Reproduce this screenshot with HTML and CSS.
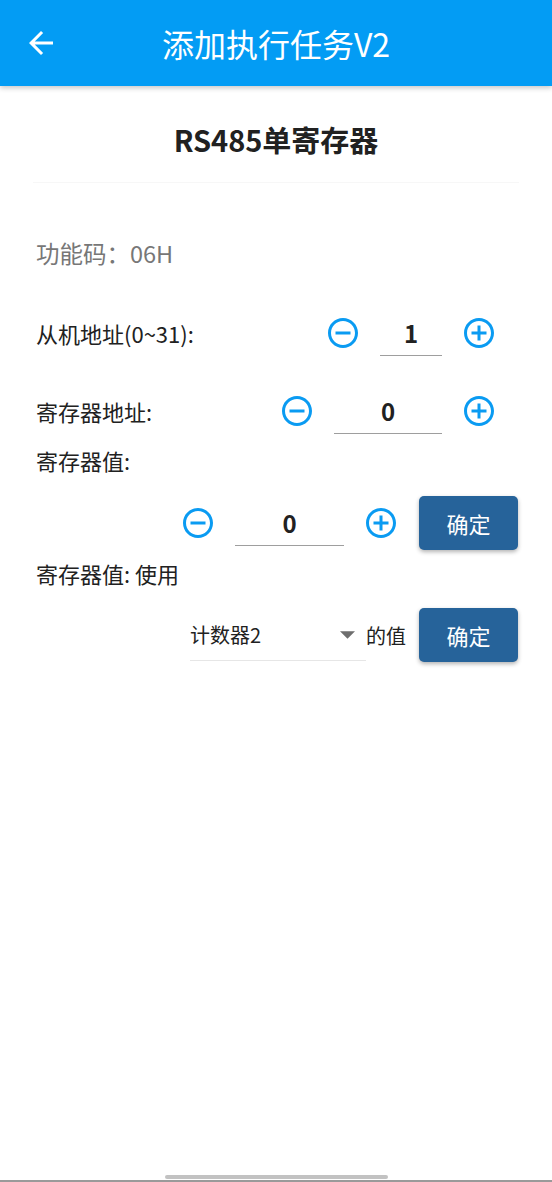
FILE: index.html
```html
<!DOCTYPE html>
<html lang="zh">
<head>
<meta charset="utf-8">
<title>添加执行任务V2</title>
<link rel="stylesheet" href="styles.css">
</head>
<body>
<div class="screen">
  <header class="appbar">
    <svg class="back" viewBox="0 0 24 24" width="36" height="36"><path fill="#fff" d="M20 11H7.83l5.59-5.59L12 4l-8 8 8 8 1.41-1.41L7.83 13H20v-2z"/></svg>
    <div class="appbar-title">添加执行任务V2</div>
    <div class="appbar-spacer"></div>
  </header>

  <main class="content">
    <div class="head"><h1 class="card-title">RS485单寄存器</h1></div>

    <div class="info">功能码：06H</div>

    <div class="row row-slave">
      <span class="label">从机地址(0~31):</span>
      <div class="stepper">
        <svg class="ic" viewBox="0 0 24 24" width="36" height="36"><path d="M7 11v2h10v-2H7zm5-9C6.48 2 2 6.48 2 12s4.48 10 10 10 10-4.480 10-10S17.52 2 12 2zm0 18c-4.41 0-8-3.59-8-8s3.59-8 8-8 8 3.590 8 8-3.59 8-8 8z"/></svg>
        <div class="field field-s">1</div>
        <svg class="ic" viewBox="0 0 24 24" width="36" height="36"><path d="M13 7h-2v4H7v2h4v4h2v-4h4v-2h-4V7zm-1-5C6.48 2 2 6.48 2 12s4.48 10 10 10 10-4.48 10-10S17.52 2 12 2zm0 18c-4.41 0-8-3.59-8-8s3.59-8 8-8 8 3.59 8 8-3.59 8-8 8z"/></svg>
      </div>
    </div>

    <div class="row row-reg">
      <span class="label">寄存器地址:</span>
      <div class="stepper">
        <svg class="ic" viewBox="0 0 24 24" width="36" height="36"><path d="M7 11v2h10v-2H7zm5-9C6.48 2 2 6.48 2 12s4.48 10 10 10 10-4.48 10-10S17.52 2 12 2zm0 18c-4.41 0-8-3.59-8-8s3.59-8 8-8 8 3.59 8 8-3.59 8-8 8z"/></svg>
        <div class="field field-l">0</div>
        <svg class="ic" viewBox="0 0 24 24" width="36" height="36"><path d="M13 7h-2v4H7v2h4v4h2v-4h4v-2h-4V7zm-1-5C6.48 2 2 6.48 2 12s4.48 10 10 10 10-4.48 10-10S17.52 2 12 2zm0 18c-4.41 0-8-3.59-8-8s3.59-8 8-8 8 3.59 8 8-3.59 8-8 8z"/></svg>
      </div>
    </div>

    <div class="label-line lbl-value">寄存器值:</div>

    <div class="row row-end row-value">
      <div class="stepper stepper-inline">
        <svg class="ic" viewBox="0 0 24 24" width="36" height="36"><path d="M7 11v2h10v-2H7zm5-9C6.48 2 2 6.48 2 12s4.48 10 10 10 10-4.48 10-10S17.52 2 12 2zm0 18c-4.41 0-8-3.59-8-8s3.59-8 8-8 8 3.59 8 8-3.59 8-8 8z"/></svg>
        <div class="field field-m">0</div>
        <svg class="ic" viewBox="0 0 24 24" width="36" height="36"><path d="M13 7h-2v4H7v2h4v4h2v-4h4v-2h-4V7zm-1-5C6.48 2 2 6.48 2 12s4.48 10 10 10 10-4.48 10-10S17.52 2 12 2zm0 18c-4.41 0-8-3.59-8-8s3.59-8 8-8 8 3.59 8 8-3.59 8-8 8z"/></svg>
      </div>
      <button class="btn">确定</button>
    </div>

    <div class="label-line lbl-use">寄存器值: 使用</div>

    <div class="row row-end row-use">
      <div class="dropdown">
        <span>计数器2</span>
        <svg class="caret" viewBox="0 0 14 7" width="15" height="8"><path d="M0 0h14L7 7z" fill="#6e6e6e"/></svg>
      </div>
      <span class="suffix">的值</span>
      <button class="btn">确定</button>
    </div>
  </main>

  <footer class="sysbar">
    <div class="home-indicator"></div>
    <div class="bottom-line"></div>
  </footer>
</div>
</body>
</html>
```

FILE: styles.css
```css
* { box-sizing: border-box; }

html, body {
  margin: 0;
  padding: 0;
  background: #ffffff;
}

body {
  font-family: "Noto Sans CJK SC", "Noto Sans", sans-serif;
  color: #212121;
}

.screen {
  width: 552px;
  height: 1182px;
  display: flex;
  flex-direction: column;
  overflow: hidden;
}

.appbar {
  position: relative;
  z-index: 2;
  height: 86px;
  flex: none;
  background: #039cf4;
  display: flex;
  align-items: center;
  box-shadow: 0 2px 5px rgba(0, 0, 0, 0.22);
}

.back {
  display: block;
  margin-left: 23px;
  flex: none;
}

.appbar-title {
  flex: 1;
  text-align: center;
  color: #ffffff;
  font-size: 32px;
  line-height: 40px;
  font-weight: 400;
}

.appbar-spacer {
  width: 59px;
  flex: none;
}

.content {
  flex: none;
  padding: 0 34px 0 36px;
}

.head {
  margin: 0 -1px 0 -3px;
  padding: 36px 0 26px;
  border-bottom: 1px solid #f7f7f7;
}

.card-title {
  margin: 0;
  text-align: center;
  font-size: 29px;
  line-height: 34px;
  font-weight: 700;
  color: #212121;
}

.info {
  margin-top: 48px;
  height: 44px;
  display: flex;
  align-items: center;
  font-size: 23.5px;
  color: #777777;
}

.row {
  display: flex;
  align-items: center;
  height: 56px;
}

.row-slave { margin-top: 30px; }
.row-reg { margin-top: 22px; }
.row-value { margin-top: 20px; }
.row-use { margin-top: 19px; }

.row-end { justify-content: flex-end; }

.label {
  font-size: 22px;
  color: #212121;
}

.label-line {
  height: 30px;
  display: flex;
  align-items: center;
  font-size: 22px;
  color: #212121;
}

.lbl-value { margin-top: 6px; }
.lbl-use { margin-top: 7px; }

.stepper {
  margin-left: auto;
  margin-right: 21px;
  display: flex;
  align-items: center;
  gap: 19px;
}

.stepper-inline {
  margin-left: 0;
  margin-right: 20px;
}

.ic {
  display: block;
  fill: #0a9bf2;
  flex: none;
}

.field {
  height: 45px;
  border-bottom: 1px solid #9e9e9e;
  display: flex;
  align-items: center;
  justify-content: center;
  font-size: 24px;
  font-weight: 700;
  color: #212121;
}

.field-s { width: 62px; }
.field-l { width: 108px; }
.field-m { width: 109px; }

.btn {
  width: 99px;
  height: 54px;
  border: none;
  border-radius: 5px;
  background: #26639a;
  color: #ffffff;
  font-family: "Noto Sans CJK SC", "Noto Sans", sans-serif;
  font-size: 22px;
  padding: 0;
  box-shadow: 0 2px 4px rgba(0, 0, 0, 0.3);
  flex: none;
}

.dropdown {
  width: 176px;
  height: 52px;
  border-bottom: 1px solid #e6e6e6;
  display: flex;
  align-items: center;
  justify-content: space-between;
  padding-right: 11px;
  font-size: 20px;
  color: #212121;
}

.caret { display: block; }

.suffix {
  font-size: 20px;
  color: #212121;
  margin-right: 13px;
}

.sysbar {
  margin-top: auto;
  flex: none;
  display: flex;
  flex-direction: column;
  align-items: center;
}

.home-indicator {
  width: 223px;
  height: 4px;
  border-radius: 2px;
  background: #c2c2c2;
}

.bottom-line {
  margin-top: 1px;
  width: 100%;
  height: 2px;
  background: #9a9a9a;
}
```
